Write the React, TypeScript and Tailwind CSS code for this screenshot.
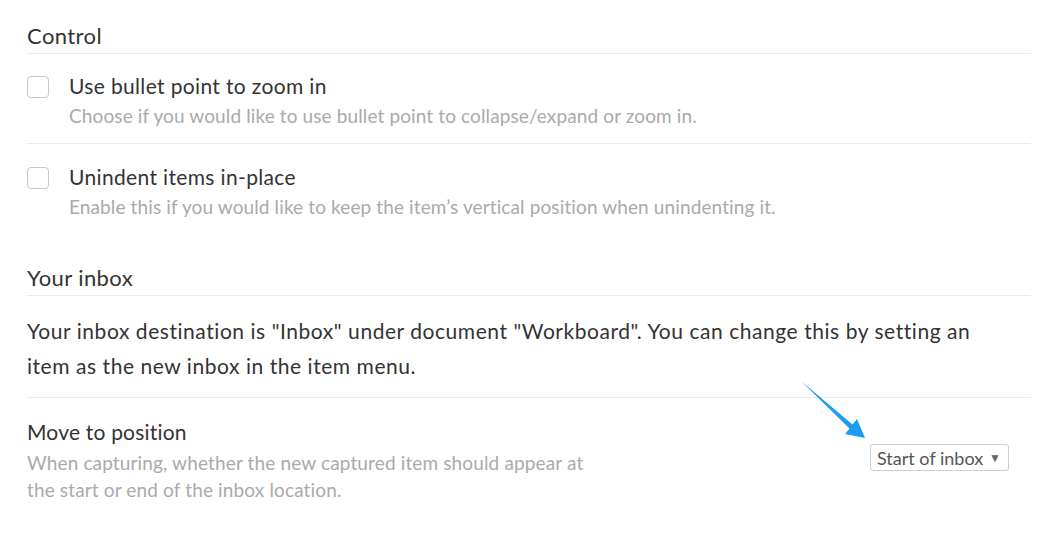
import React from 'react';

const font = { fontFamily: 'Lato, "Noto Sans", sans-serif' };

type ToggleProps = { title: string; desc: string; pt: string; last?: boolean };

const ToggleRow: React.FC<ToggleProps> = ({ title, desc, pt, last }) => (
  <div className={`flex gap-[20px] ${last ? '' : 'border-b border-[#e9e9e9] pb-[14px]'} ${pt}`}>
    <div className="mt-[4px] h-[22px] w-[22px] shrink-0 rounded-[4px] border border-[#c8c8c8] bg-white" />
    <div className="flex flex-col">
      <span className="text-[21px] leading-[28px] tracking-[0.35px] text-[#333]">{title}</span>
      <span className="mt-[3px] text-[19px] leading-[26px] tracking-[0.12px] text-[#aaa]">{desc}</span>
    </div>
  </div>
);

const SectionTitle: React.FC<{ children: React.ReactNode; pt: string }> = ({ children, pt }) => (
  <h2 className={`border-b border-[#e9e9e9] pb-[3px] text-[22px] leading-[28px] tracking-[0.4px] text-[#333] ${pt}`}>
    {children}
  </h2>
);

export default function App() {
  return (
    <div style={font} className="relative min-h-[534px] w-[1039px] bg-white pl-[27px] pr-[8px]">
      <SectionTitle pt="pt-[22px]">Control</SectionTitle>
      <ToggleRow
        pt="pt-[18px]"
        title="Use bullet point to zoom in"
        desc="Choose if you would like to use bullet point to collapse/expand or zoom in."
      />
      <ToggleRow
        pt="pt-[19px]"
        last
        title="Unindent items in-place"
        desc="Enable this if you would like to keep the item’s vertical position when unindenting it."
      />

      <SectionTitle pt="pt-[44px]">Your inbox</SectionTitle>
      <p className="border-b border-[#e9e9e9] pb-[14px] pr-[30px] pt-[17px] text-[21px] leading-[35px] tracking-[0.55px] text-[#333]">
        Your inbox destination is "Inbox" under document "Workboard". You can change this by setting an item as the new inbox in the item menu.
      </p>

      <div className="flex items-center justify-between pr-[22px] pt-[20px]">
        <div className="flex w-[575px] flex-col">
          <span className="text-[21px] leading-[28px] tracking-[0.2px] text-[#333]">Move to position</span>
          <span className="mt-[3px] text-[19px] leading-[27px] tracking-[0.14px] text-[#aaa]">
            When capturing, whether the new captured item should appear at the start or end of the inbox location.
          </span>
        </div>
        <div className="mt-[-6px] flex h-[27px] w-[139px] items-center justify-between rounded-[3px] border border-[#cfcfcf] bg-white pl-[6px] pr-[7px]">
          <span className="text-[18px] leading-none text-[#555]">Start of inbox</span>
          <span className="text-[12px] leading-none text-[#666]">▼</span>
        </div>
      </div>

      <svg className="absolute left-[795px] top-[375px]" width="75" height="70" viewBox="795 375 75 70">
        <polygon points="801,381 852.5,424.5 857,419 865,438 845,434 849.5,428.5" fill="#1c9bf3" />
      </svg>
    </div>
  );
}
